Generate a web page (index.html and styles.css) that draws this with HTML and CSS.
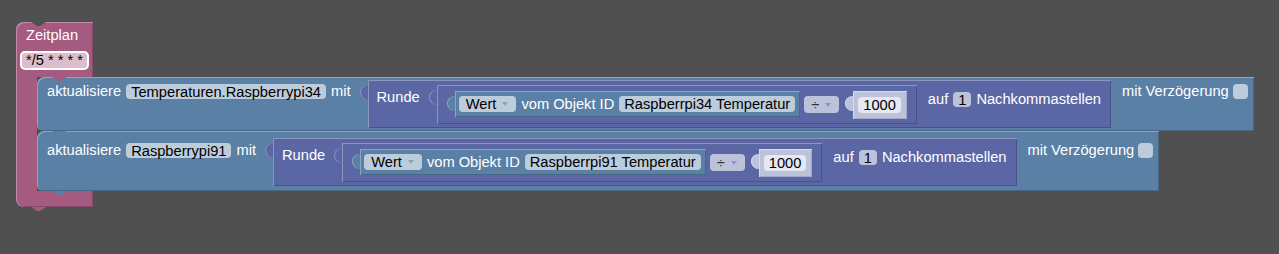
FILE: index.html
```html
<!DOCTYPE html>
<html>

<head>
    <meta charset="UTF-8">
    <title>Zeitplan</title>
    <link rel="stylesheet" href="styles.css">
</head>

<body>
    <div class="workspace">
        <div class="hat pink">
            <div class="head">
                <span class="txt">Zeitplan</span>
                <span class="cron">*/5 * * * *</span>
            </div>
            <div class="statement">
                <div class="arm"></div>
                <div class="stack">

                    <div class="stmt blue first">
                        <div class="lead">
                            <span class="txt">aktualisiere</span>
                            <span class="fld">Temperaturen.Raspberrypi34</span>
                            <span class="txt">mit</span>
                        </div>
                        <div class="val purple round">
                            <span class="txt label">Runde</span>
                            <div class="val purple arith">
                                <div class="val blue getval">
                                    <span class="fld drop">Wert<i class="arrow"></i></span>
                                    <span class="txt">vom Objekt ID</span>
                                    <span class="fld">Raspberrpi34 Temperatur</span>
                                </div>
                                <span class="fld drop op">÷<i class="arrow"></i></span>
                                <div class="val shadow num">
                                    <span class="fld">1000</span>
                                </div>
                            </div>
                            <div class="tail">
                                <span class="txt">auf</span>
                                <span class="fld">1</span>
                                <span class="txt">Nachkommastellen</span>
                            </div>
                        </div>
                        <div class="delay">
                            <span class="txt">mit Verzögerung</span>
                            <span class="check"></span>
                        </div>
                    </div>

                    <div class="stmt blue second">
                        <div class="lead">
                            <span class="txt">aktualisiere</span>
                            <span class="fld">Raspberrypi91</span>
                            <span class="txt">mit</span>
                        </div>
                        <div class="val purple round">
                            <span class="txt label">Runde</span>
                            <div class="val purple arith">
                                <div class="val blue getval">
                                    <span class="fld drop">Wert<i class="arrow"></i></span>
                                    <span class="txt">vom Objekt ID</span>
                                    <span class="fld">Raspberrpi91 Temperatur</span>
                                </div>
                                <span class="fld drop op">÷<i class="arrow"></i></span>
                                <div class="val shadow num">
                                    <span class="fld">1000</span>
                                </div>
                            </div>
                            <div class="tail">
                                <span class="txt">auf</span>
                                <span class="fld">1</span>
                                <span class="txt">Nachkommastellen</span>
                            </div>
                        </div>
                        <div class="delay">
                            <span class="txt">mit Verzögerung</span>
                            <span class="check"></span>
                        </div>
                    </div>

                </div>
            </div>
            <div class="foot"></div>
        </div>
    </div>
</body>

</html>
```

FILE: styles.css
```css
* {
    box-sizing: border-box;
}

body {
    margin: 0;
    background: #505050;
    font-family: "Liberation Sans", Arial, sans-serif;
    font-size: 14.667px;
    line-height: 17px;
    color: #fff;
}

.workspace {
    width: 1279px;
    height: 254px;
    padding: 22px 0 0 16px;
    overflow: hidden;
}

/* block colours */
.pink {
    --c: #a55b80;
    --l: #c08ca6;
    --d: #844966;
}

.blue {
    --c: #5b80a5;
    --l: #8ca6c0;
    --d: #496684;
}

.purple {
    --c: #5b67a5;
    --l: #8c95c0;
    --d: #495284;
}

.shadow {
    --c: #bdc2db;
    --l: #d7dae9;
    --d: #a3a8c6;
}

.txt {
    white-space: nowrap;
}

.fld {
    display: inline-flex;
    align-items: center;
    height: 16px;
    line-height: 16px;
    padding: 0 5px;
    border-radius: 4px;
    background: rgba(255, 255, 255, 0.6);
    color: #000;
    white-space: nowrap;
}

/* Zeitplan hat block */
.hat {
    display: inline-flex;
    flex-direction: column;
    align-items: flex-start;
}

.head {
    position: relative;
    display: flex;
    flex-direction: column;
    align-items: flex-start;
    width: 77px;
    height: 55px;
    padding: 5px 0 0 4px;
    background: var(--c);
    border-radius: 8px 0 0 0;
    box-shadow: inset 1px 1px 0 var(--l), inset -1px 0 0 var(--d);
}

.head .txt {
    margin-left: 6px;
}

.head::before {
    content: "";
    position: absolute;
    top: 0;
    left: 15px;
    width: 15px;
    height: 4px;
    background: #505050;
    clip-path: polygon(0 0, 100% 0, 60% 100%, 40% 100%);
}

.head::after {
    content: "";
    position: absolute;
    bottom: -4px;
    left: 36px;
    width: 15px;
    height: 4px;
    background: var(--c);
    clip-path: polygon(0 0, 100% 0, 60% 100%, 40% 100%);
    z-index: 2;
}

.cron {
    margin-top: 7px;
    height: 19px;
    line-height: 15px;
    padding: 0 4px;
    border: 2px solid #fff;
    border-radius: 5px;
    background: #dbbdcc;
    color: #000;
    white-space: nowrap;
}

.statement {
    display: flex;
}

.arm {
    width: 21px;
    background: var(--c);
    box-shadow: inset 1px 0 0 var(--l);
}

.stack {
    display: flex;
    flex-direction: column;
    align-items: flex-start;
}

.foot {
    position: relative;
    width: 77px;
    height: 16px;
    background: var(--c);
    border-radius: 0 0 0 8px;
    box-shadow: inset 1px 0 0 var(--l), inset -1px -1px 0 var(--d);
}

.foot::after {
    content: "";
    position: absolute;
    bottom: -4px;
    left: 15px;
    width: 15px;
    height: 4px;
    background: var(--c);
    clip-path: polygon(0 0, 100% 0, 60% 100%, 40% 100%);
}

/* statement blocks */
.stmt {
    position: relative;
    display: flex;
    align-items: flex-start;
    padding: 3px 6px 3px 10px;
    background: var(--c);
    border-radius: 8px 0 0 6px;
    box-shadow: inset 1px 1px 0 var(--l), inset -1px -1px 0 var(--d);
}

.stmt::after {
    content: "";
    position: absolute;
    bottom: -4px;
    left: 15px;
    width: 15px;
    height: 4px;
    background: var(--c);
    clip-path: polygon(0 0, 100% 0, 60% 100%, 40% 100%);
    z-index: 2;
}

.stmt.second {
    padding-top: 7px;
    padding-bottom: 5px;
}

.lead,
.delay {
    display: flex;
    align-items: center;
    gap: 5px;
    margin-top: 3px;
}

.second .lead,
.second .delay {
    margin-top: 4px;
}

.lead .fld {
    height: 15px;
}

.delay {
    margin-left: 11px;
    gap: 4px;
}

.check {
    width: 15px;
    height: 15px;
    border-radius: 4px;
    background: rgba(255, 255, 255, 0.6);
}

/* value blocks */
.val {
    position: relative;
    display: flex;
    background: var(--c);
    box-shadow: inset 1px 1px 0 var(--l), inset -1px -1px 0 var(--d);
}

.val::before {
    content: "";
    position: absolute;
    left: -8px;
    top: 5px;
    width: 8px;
    height: 15px;
    background: var(--c);
    border-radius: 8px 0 0 8px / 7.5px 0 0 7.5px;
    box-shadow: inset 1px 0 0 var(--l);
}

.round {
    align-items: flex-start;
    margin-left: 17px;
    padding: 5px 10px 4px 9px;
}

.round .label {
    margin-top: 4px;
}

.arith {
    align-items: flex-start;
    margin-left: 17px;
    padding: 6px 10px 5px 18px;
}

.getval {
    align-items: center;
    gap: 5px;
    height: 26px;
    padding: 0 5px 0 4px;
}

.drop {
    padding: 0 8px 0 7px;
}

.arrow {
    display: inline-block;
    margin-left: 6px;
    border-left: 3px solid transparent;
    border-right: 3px solid transparent;
    border-top: 4px solid #8aa3bd;
}

.op {
    height: 17px;
    margin: 5px 0 0 4px;
    background: #bdc2db;
    color: #333;
}

.op .arrow {
    border-top-color: #8c95c5;
}

.num {
    align-items: center;
    height: 28px;
    margin-left: 14px;
    padding: 0 6px 0 5px;
}

.num .fld {
    background: #e5e7f1;
}

.tail {
    display: flex;
    align-items: center;
    gap: 5px;
    margin: 6px 0 0 11px;
}

.tail .fld {
    height: 15px;
}
```
